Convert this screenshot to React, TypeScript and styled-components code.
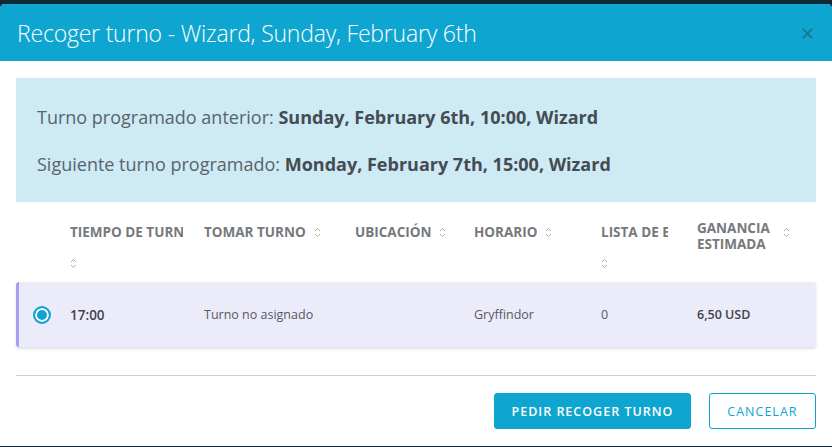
import React from 'react';
import styled, { createGlobalStyle } from 'styled-components';

const GlobalStyle = createGlobalStyle`
  html, body {
    margin: 0;
    padding: 0;
    background: #0d2b34;
    font-family: "Open Sans", "Liberation Sans", sans-serif;
  }
`;

const Backdrop = styled.div`
  width: 832px;
  height: 447px;
  padding-top: 4px;
  box-sizing: border-box;
  overflow: hidden;
`;

const Modal = styled.div`
  height: 442px;
  background: #fff;
  border-radius: 5px 5px 0 0;
  overflow: hidden;
  display: flex;
  flex-direction: column;
`;

const Header = styled.div`
  height: 57px;
  background: #0ea5d0;
  display: flex;
  align-items: center;
  justify-content: space-between;
  padding: 0 17px 0 17px;
`;

const Title = styled.h1`
  margin: 0;
  font-size: 23px;
  font-weight: 300;
  color: #fff;
  letter-spacing: -0.2px;
`;

const Close = styled.button`
  border: none;
  background: none;
  padding: 0;
  color: #1a7594;
  font-size: 18px;
  line-height: 1;
  cursor: pointer;
  font-family: "Open Sans", sans-serif;
`;

const Body = styled.div`
  padding: 17px 16px 0;
`;

const Info = styled.div`
  background: #cdeaf5;
  padding: 27px 21px 26px;
  display: flex;
  flex-direction: column;
  gap: 23px;
  font-size: 18px;
  line-height: 24px;
  color: #59636a;

  b {
    color: #454c51;
    font-weight: 700;
  }
`;

const cols = '46px 134px 151px 119px 127px 96px 127px';

const HeadRow = styled.div`
  display: grid;
  grid-template-columns: ${cols};
  margin-top: 17px;
  height: 63px;
`;

const HeadCell = styled.div<{ wrap?: boolean; padRight?: number }>`
  display: flex;
  flex-wrap: ${(p) => (p.wrap ? 'nowrap' : 'wrap')};
  align-items: flex-start;
  column-gap: 8px;
  padding: 0 ${(p) => p.padRight ?? 12}px 0 8px;
  min-width: 0;
  font-size: 13.5px;
  font-weight: 700;
  color: #75797c;
  text-transform: uppercase;
  line-height: 26px;
`;

const Label = styled.span<{ clip?: number; wrap?: boolean }>`
  white-space: ${(p) => (p.wrap ? 'normal' : 'nowrap')};
  overflow: hidden;
  line-height: ${(p) => (p.wrap ? '16px' : '26px')};
  max-width: ${(p) => (p.clip ? `${p.clip}px` : '100%')};
  ${(p) => (p.wrap ? 'padding-top: 1px;' : '')}
`;

const SortBox = styled.span`
  display: inline-flex;
  align-items: center;
  height: 26px;
  flex-shrink: 0;
`;

const rowCols = '43px 134px 151px 119px 127px 96px 127px';

const Row = styled.div`
  display: grid;
  grid-template-columns: ${rowCols};
  align-items: center;
  height: 65px;
  background: #ecebfa;
  border-left: 3px solid #a59ff0;
  border-radius: 3px;
  box-shadow: 0 2px 3px rgba(0, 0, 0, 0.12);
  box-sizing: border-box;
`;

const Cell = styled.div<{ strong?: boolean }>`
  padding-left: 8px;
  font-size: ${(p) => (p.strong ? '13.5px' : '12.5px')};
  font-weight: ${(p) => (p.strong ? 600 : 400)};
  color: ${(p) => (p.strong ? '#3f4448' : '#55595d')};
`;

const AmountCell = styled(Cell)`
  font-size: 12.5px;
  font-weight: 600;
  color: #3f4448;
`;

const RadioCell = styled.div`
  display: flex;
  justify-content: center;
  padding-left: 2px;
`;

const Radio = styled.span`
  width: 14px;
  height: 14px;
  border-radius: 50%;
  border: 2px solid #0ea5d0;
  background: #0ea5d0;
  box-shadow: inset 0 0 0 2px #fff;
`;

const Divider = styled.div`
  height: 1px;
  background: #cfcfcf;
  margin-top: 28px;
`;

const Footer = styled.div`
  display: flex;
  justify-content: flex-end;
  gap: 18px;
  padding-top: 17px;
`;

const Button = styled.button<{ primary?: boolean }>`
  height: 36px;
  padding: 0 ${(p) => (p.primary ? '16.5px' : '17.5px')};
  border-radius: 3px;
  border: 1px solid #0ea5d0;
  background: ${(p) => (p.primary ? '#0ea5d0' : '#fff')};
  color: ${(p) => (p.primary ? '#fff' : '#0ea5d0')};
  font-family: "Open Sans", sans-serif;
  font-size: 12.5px;
  font-weight: ${(p) => (p.primary ? 600 : 400)};
  letter-spacing: 1px;
  text-transform: uppercase;
  cursor: pointer;
`;

function SortIcon() {
  return (
    <SortBox>
      <svg width="7" height="11" viewBox="0 0 7 11" fill="none" stroke="#a9acae" strokeWidth="1">
        <path d="M1 4 L3.5 1.5 L6 4" />
        <path d="M1 7 L3.5 9.5 L6 7" />
      </svg>
    </SortBox>
  );
}

type Col = { label: string; clip?: number; wrap?: boolean; padRight?: number };

const columns: Col[] = [
  { label: 'Tiempo de turno', clip: 113 },
  { label: 'Tomar turno' },
  { label: 'Ubicación' },
  { label: 'Horario' },
  { label: 'Lista de espera', clip: 67 },
  { label: 'Ganancia estimada', wrap: true, padRight: 26 },
];

export default function App() {
  return (
    <Backdrop>
      <GlobalStyle />
      <Modal>
        <Header>
          <Title>Recoger turno - Wizard, Sunday, February 6th</Title>
          <Close>✕</Close>
        </Header>
        <Body>
          <Info>
            <div>
              Turno programado anterior: <b>Sunday, February 6th, 10:00, Wizard</b>
            </div>
            <div>
              Siguiente turno programado: <b>Monday, February 7th, 15:00, Wizard</b>
            </div>
          </Info>
          <HeadRow>
            <div />
            {columns.map((c) => (
              <HeadCell key={c.label} wrap={c.wrap} padRight={c.padRight}>
                <Label clip={c.clip} wrap={c.wrap}>{c.label}</Label>
                <SortIcon />
              </HeadCell>
            ))}
          </HeadRow>
          <Row>
            <RadioCell>
              <Radio />
            </RadioCell>
            <Cell strong>17:00</Cell>
            <Cell>Turno no asignado</Cell>
            <Cell />
            <Cell>Gryffindor</Cell>
            <Cell>0</Cell>
            <AmountCell>6,50 USD</AmountCell>
          </Row>
          <Divider />
          <Footer>
            <Button primary>Pedir recoger turno</Button>
            <Button>Cancelar</Button>
          </Footer>
        </Body>
      </Modal>
    </Backdrop>
  );
}
